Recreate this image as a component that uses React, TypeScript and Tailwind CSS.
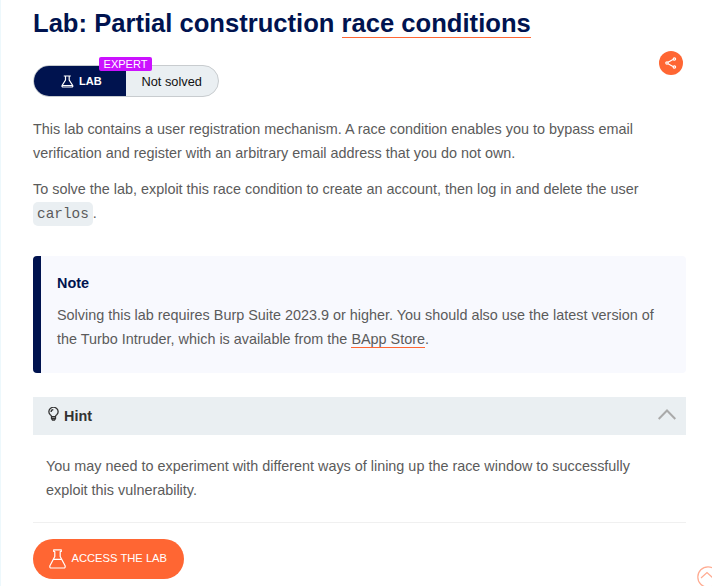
function Flask({ className, stroke }: { className: string; stroke: number }) {
  return (
    <svg viewBox="0 0 17 20" className={className} fill="none" stroke="currentColor" strokeWidth={stroke} strokeLinejoin="round">
      <path d="M4.700 .8h7.600v1.700h-1.100v5l4.900 9.200q.5 2.300-1.300 2.300H2.200Q.4 19 .9 16.700l4.900-9.200v-5H4.700zM4.600 10.300h7.800" />
    </svg>
  );
}

function StatusPill() {
  return (
    <div className="relative mt-[24px] flex h-8 w-[186px] overflow-visible">
      <div className="flex w-full overflow-hidden rounded-full border border-[#c8cccf] bg-[#eaeff2]">
        <div className="flex w-[92px] shrink-0 items-center bg-[#00134f] pl-[26px] text-white">
          <svg viewBox="0 0 13 13" className="ml-px h-[13px] w-[13px]" fill="none" stroke="currentColor" strokeWidth="1.200">
            <path d="M2.800 1h7M4.500 1v4L1.100 10.500q-.5 1.500 1 1.500h8.600q1.500 0 1-1.500L8.200 5V1M1.500 10.500h9.800" />
          </svg>
          <span className="ml-[5px] text-[11px] font-bold leading-[30px]">LAB</span>
        </div>
        <span className="pl-[15.500px] text-[12.8px] leading-[31px] text-[#111]">Not solved</span>
      </div>
      <span className="absolute left-[66px] top-[-8px] h-[14px] w-[53px] rounded-[2px] bg-[#cb11ff] text-center text-[11px] leading-[14px] text-white">
        EXPERT
      </span>
    </div>
  );
}

function Note() {
  return (
    <section className="mt-[31px] h-[117px] rounded-[4px] border-l-8 border-[#00134f] bg-[#f8f9fe] pl-4 pt-[15px] leading-6">
      <h2 className="font-bold text-[#00134f]">Note</h2>
      <p className="mt-2">
        Solving this lab requires Burp Suite 2023.9 or higher. You should also use the latest version of
        <br />
        the Turbo Intruder, which is available from the{" "}
        <a className="border-b border-[#ff6633]">BApp Store</a>.
      </p>
    </section>
  );
}

function Hint() {
  return (
    <section className="mt-6 h-[126px] border-b border-[#f0f0f0]">
      <header className="flex h-[38px] items-center bg-[#eaeff2] pl-[15px] pr-[10px]">
        <svg viewBox="0 0 11 14" className="mt-[-4px] h-[14px] w-[11px]" fill="none" stroke="#333" strokeWidth="1.300">
          <path d="M3.500 9.600Q3.500 8.500 2 7.400A4.600 4.300 0 1 1 9 7.400Q7.500 8.500 7.500 9.600zM3.500 9.600v2L4.500 13h2l1-1.400v-2M3.500 11.400h4M3.100 5A2.300 2.300 0 0 1 5.300 2.700" />
        </svg>
        <h2 className="ml-[5px] flex-1 font-bold leading-[38px] text-[#333]">Hint</h2>
        <svg viewBox="0 0 18 11" className="mt-[-4px] h-[11px] w-[18px]" fill="none" stroke="#aaa" strokeWidth="2">
          <path d="M.7 10 9 1.500l8.300 8.500" />
        </svg>
      </header>
      <p className="pl-[13px] pt-[19px] leading-6">
        You may need to experiment with different ways of lining up the race window to successfully
        <br />
        exploit this vulnerability.
      </p>
    </section>
  );
}

export default function App() {
  return (
    <div className="relative h-[586px] w-[712px] overflow-hidden whitespace-nowrap border-l border-[#edf8fc] bg-white pl-8 pr-[26px] font-['Liberation_Sans',Arial,sans-serif] text-[14.4px] text-[#5b5b5b]">
      <h1 className="h-[41px] pt-[3px] text-[25.6px] font-bold leading-10 text-[#00134f]">
        Lab: Partial construction <a className="border-b border-[#ff6633]">race conditions</a>
      </h1>
      <div className="flex justify-between">
        <StatusPill />
        <button className="mt-[10px] mr-[3px] flex h-6 w-6 items-center justify-center rounded-full bg-[#ff6633] text-white">
          <svg viewBox="0 0 12 12" className="h-3 w-3" fill="none" stroke="currentColor" strokeWidth="1.200">
            <path d="M3 5.300 8 2.500M3 6.700 8 9.500" />
            <circle cx="2" cy="6" r="1.200" />
            <circle cx="9.400" cy="2" r="1.200" />
            <circle cx="9.400" cy="10" r="1.200" />
          </svg>
        </button>
      </div>
      <p className="mt-5 leading-6">
        This lab contains a user registration mechanism. A race condition enables you to bypass email
        <br />
        verification and register with an arbitrary email address that you do not own.
      </p>
      <p className="mt-3 h-12 leading-6">
        To solve the lab, exploit this race condition to create an account, then log in and delete the user
        <br />
        <code className="mt-px inline-block h-6 rounded-[5px] bg-[#eaeff2] px-1 align-top font-['Liberation_Mono',monospace] text-[14.4px] leading-6">carlos</code>.
      </p>
      <Note />
      <Hint />
      <button className="mt-4 flex h-10 w-[151px] items-center rounded-full bg-[#ff6633] pl-4 text-[11.2px] text-white">
        <Flask className="mt-[-1px] h-5 w-[17px]" stroke={1.2} />
        <span className="ml-[5.500px] mt-[-2px]">ACCESS THE LAB</span>
      </button>
      <svg viewBox="0 0 22 22" className="absolute left-[696px] top-[566px] h-[22px] w-[22px]" fill="none" stroke="#ffab91" strokeWidth="1.200">
        <circle cx="11" cy="11" r="10.200" />
        <path d="m4 12 6-5.500 6 5.500" />
      </svg>
    </div>
  );
}
